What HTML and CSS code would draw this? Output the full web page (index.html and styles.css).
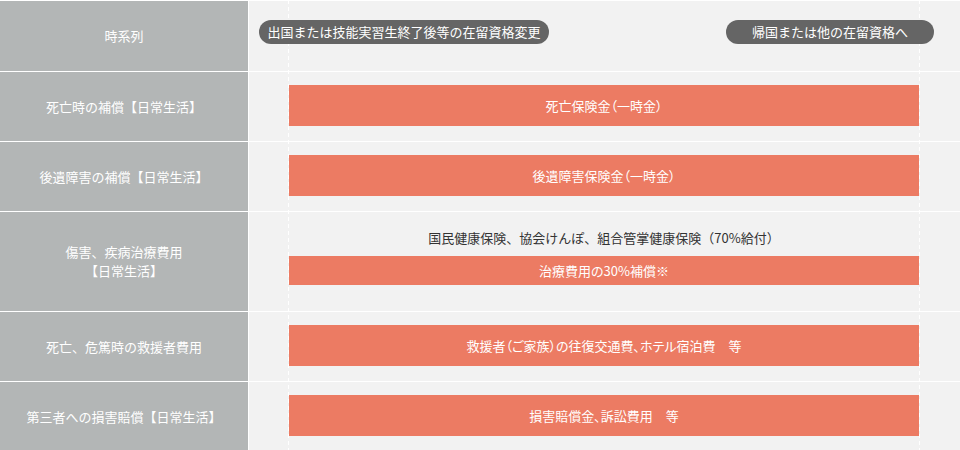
FILE: index.html
```html
<!DOCTYPE html>
<html lang="ja">
<head>
<meta charset="utf-8">
<title>時系列</title>
<link rel="stylesheet" href="styles.css">
</head>
<body>
<div class="chart">
  <div class="label">時系列</div>
  <div class="cell cell-head">
    <span class="pill pill-start">出国または技能実習生終了後等の在留資格変更</span>
    <span class="pill pill-end">帰国または他の在留資格へ</span>
  </div>

  <div class="label">死亡時の補償【日常生活】</div>
  <div class="cell"><div class="bar">死亡保険金（一時金）</div></div>

  <div class="label">後遺障害の補償【日常生活】</div>
  <div class="cell"><div class="bar">後遺障害保険金（一時金）</div></div>

  <div class="label label-multi">傷害、疾病治療費用<br>【日常生活】</div>
  <div class="cell cell-medical">
    <div class="note">国民健康保険、協会けんぽ、組合管掌健康保険（70%給付）</div>
    <div class="bar bar-thin">治療費用の30%補償※</div>
  </div>

  <div class="label">死亡、危篤時の救援者費用</div>
  <div class="cell"><div class="bar">救援者（ご家族）の往復交通費、ホテル宿泊費　等</div></div>

  <div class="label">第三者への損害賠償【日常生活】</div>
  <div class="cell"><div class="bar">損害賠償金、訴訟費用　等</div></div>

  <div class="guide guide-start"></div>
  <div class="guide guide-end"></div>
</div>
</body>
</html>
```

FILE: styles.css
```css
html, body {
  margin: 0;
  padding: 0;
  background: #f2f2f2;
  overflow: hidden;
}

body {
  width: 960px;
  height: 450px;
  font-family: "Noto Sans CJK JP", "Noto Sans", sans-serif;
  font-size: 13px;
  color: #ffffff;
}

.chart {
  position: relative;
  display: grid;
  grid-template-columns: 248px 711px;
  grid-template-rows: 70px 69px 69px 99px 69px 69px;
  column-gap: 1px;
  row-gap: 1px;
  padding-top: 1px;
  background: #ffffff;
}

.label {
  background: #b3b6b6;
  color: #ffffff;
  display: flex;
  align-items: center;
  justify-content: center;
  text-align: center;
  line-height: 18px;
}

.label-multi {
  line-height: 18.5px;
}

.cell {
  background: #f2f2f2;
  padding: 13px 0 0 40px;
}

.cell-head {
  display: flex;
  align-items: flex-start;
  justify-content: space-between;
  padding: 19px 26px 0 10px;
}

.pill {
  position: relative;
  z-index: 2;
  display: block;
  height: 24px;
  line-height: 24px;
  border-radius: 12px;
  background: #656565;
  color: #ffffff;
  text-align: center;
}

.pill-start {
  width: 290px;
}

.pill-end {
  width: 208px;
}

.bar {
  position: relative;
  z-index: 2;
  width: 630px;
  height: 41px;
  line-height: 41px;
  background: #ec7b63;
  color: #ffffff;
  text-align: center;
  font-feature-settings: "palt";
}

.cell-medical {
  padding-top: 16px;
}

.note {
  width: 630px;
  height: 20px;
  line-height: 20px;
  text-align: center;
  color: #333333;
  margin-bottom: 8px;
}

.bar-thin {
  height: 29px;
  line-height: 29px;
}

.guide {
  position: absolute;
  top: 0;
  bottom: 0;
  width: 1px;
  z-index: 1;
  background: repeating-linear-gradient(to bottom, #ffffff 0, #ffffff 4px, transparent 4px, transparent 7px);
}

.guide-start {
  left: 288px;
}

.guide-end {
  left: 919px;
}
```
